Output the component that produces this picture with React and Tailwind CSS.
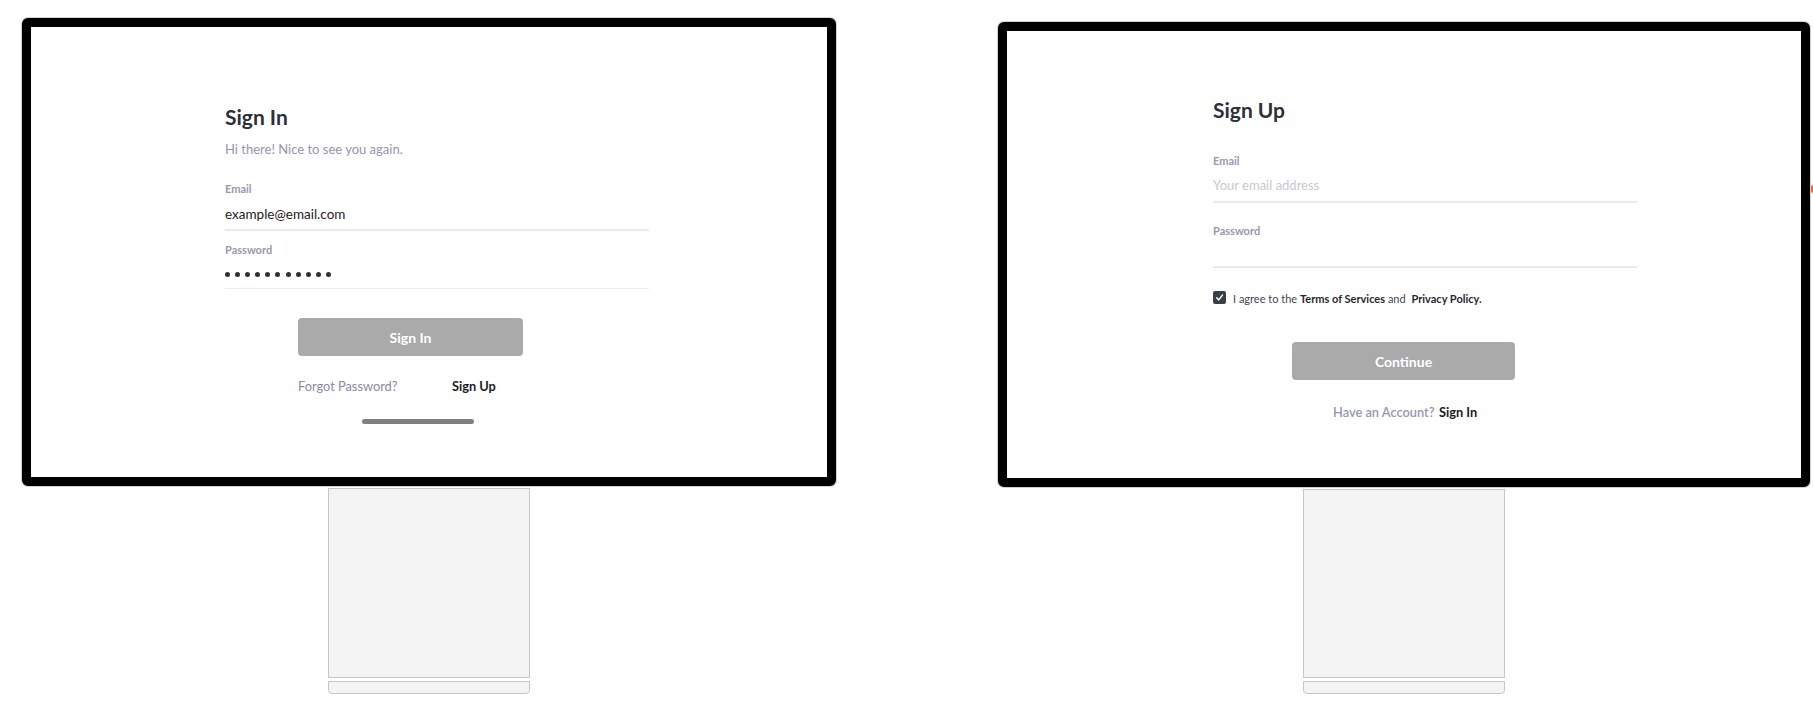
import React from 'react';

const Stand = ({ h }) => (
  <div className="flex flex-col items-center">
    <div className={`w-[202px] ${h} bg-[#f4f4f4] border border-[#c6c6c6]`} />
    <div className="mt-[3px] w-[202px] h-[13px] bg-[#f4f4f4] border border-[#c6c6c6] rounded-b-[4px]" />
  </div>
);

function SignInScreen() {
  return (
    <div className="flex flex-col items-center pt-[18px]">
      <div className="w-[814px] h-[468px] border-[9px] border-black rounded-[6px] bg-white shadow-[0_0_0_1px_#d2d2d2]">
        <div className="pl-[194px] pt-[78px] w-[618px] flex flex-col">
          <h1 className="text-[21px] leading-[24px] font-bold text-[#2d3039]">Sign In</h1>
          <p className="mt-[11px] text-[13px] leading-[18px] text-[#9795ab]">Hi there! Nice to see you again.</p>

          <label className="mt-[24px] text-[11px] leading-[14px] font-bold text-[#9a98ad]">Email</label>
          <div className="mt-[8px] pb-[5px] border-b-2 border-[#ebebeb] text-[13.5px] leading-[20px] text-[#1f2024]">
            example@email.com
          </div>

          <label className="mt-[12px] text-[11px] leading-[14px] font-bold text-[#9a98ad]">Password</label>
          <div className="pt-[15px] pb-[11px] border-b border-[#ececec] flex gap-[5.1px]">
            {Array.from({ length: 11 }).map((_, i) => (
              <span key={i} className="w-[5px] h-[5px] rounded-full bg-[#2d3039]" />
            ))}
          </div>

          <button className="mt-[29px] ml-[73px] w-[225px] h-[38px] rounded-[4px] bg-[#aaaaaa] text-white text-[14px] font-bold">
            Sign In
          </button>

          <div className="mt-[21px] ml-[73px] flex text-[12.8px] leading-[18px]">
            <span className="w-[154px] text-[#8a8aa3]">Forgot Password?</span>
            <span className="font-bold text-[#1c1c22]">Sign Up</span>
          </div>

          <div className="mt-[24px] ml-[137px] w-[112px] h-[5px] rounded-full bg-[#808080]" />
        </div>
      </div>
      <div className="mt-[2px]">
        <Stand h="h-[190px]" />
      </div>
    </div>
  );
}

function SignUpScreen() {
  return (
    <div className="relative flex flex-col items-center pt-[22px]">
      <div className="w-[812px] h-[465px] border-[9px] border-black rounded-[6px] bg-white shadow-[0_0_0_1px_#d2d2d2]">
        <div className="pl-[206px] pt-[67px] w-[630px] flex flex-col">
          <h1 className="text-[21px] leading-[24px] font-bold text-[#2d3039]">Sign Up</h1>

          <label className="mt-[32px] text-[11px] leading-[14px] font-bold text-[#9a98ad]">Email</label>
          <div className="mt-[7px] pb-[6px] border-b-2 border-[#ebebeb] text-[13px] leading-[20px] text-[#c8c8d2]">
            Your email address
          </div>

          <label className="mt-[21px] text-[11px] leading-[14px] font-bold text-[#9a98ad]">Password</label>
          <div className="h-[30px] border-b-2 border-[#ebebeb]" />

          <div className="mt-[23px] flex items-start gap-[7px]">
            <span className="w-[13px] h-[13px] rounded-[2px] bg-[#3a3f47] flex items-center justify-center">
              <svg width="11" height="11" viewBox="0 0 12 12">
                <path d="M3 6.4 L5.1 8.6 L9.2 3.4" fill="none" stroke="white" strokeWidth="1.6" strokeLinecap="round" strokeLinejoin="round" />
              </svg>
            </span>
            <p className="mt-[1px] text-[11px] leading-[14px] text-[#44464d]">
              I agree to the <span className="font-bold text-[#26282e]">Terms of Services</span> and{' '}
              <span className="ml-[3px] font-bold text-[#26282e]">Privacy Policy.</span>
            </p>
          </div>

          <button className="mt-[36px] ml-[79px] w-[223px] h-[38px] rounded-[4px] bg-[#aaaaaa] text-white text-[14px] font-bold">
            Continue
          </button>

          <div className="mt-[23px] ml-[120px] flex text-[12.8px] leading-[18px] whitespace-nowrap">
            <span className="w-[106px] shrink-0 font-semibold text-[#9896ac]">Have an Account?</span>
            <span className="font-bold text-[#1c1c22]">Sign In</span>
          </div>
        </div>
      </div>
      <div className="mt-[2px]">
        <Stand h="h-[189px]" />
      </div>
      {/* little orange tab peeking in at the edge */}
      <span className="absolute top-[185px] right-[-3px] w-[2px] h-[8px] rounded-l-full bg-[#f26b1d]" />
    </div>
  );
}

export default function App() {
  return (
    <div className="w-[1813px] h-[715px] bg-white overflow-hidden font-['Lato',sans-serif]">
      <div className="flex items-start pl-[22px] gap-[162px]">
        <SignInScreen />
        <SignUpScreen />
      </div>
    </div>
  );
}
